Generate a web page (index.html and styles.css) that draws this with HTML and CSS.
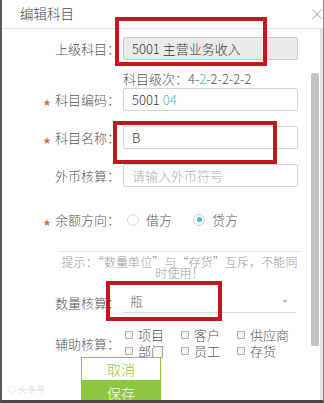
FILE: index.html
```html
<!DOCTYPE html>
<html lang="zh-CN">
<head>
    <meta charset="UTF-8">
    <meta name="viewport" content="width=device-width, initial-scale=1.0">
    <title>编辑科目</title>
    <link rel="stylesheet" href="styles.css">
</head>
<body>
    <div class="window">
        <div class="head">
            <span class="title">编辑科目</span>
            <span class="close">×</span>
        </div>

        <div class="main">
            <div class="form">
                <div class="row first">
                    <label class="lbl">上级科目：</label>
                    <div class="field readonly">5001 主营业务收入</div>
                </div>
                <div class="level">科目级次：4-<span class="hl">2</span>-2-2-2-2</div>

                <div class="row after-level">
                    <label class="lbl"><span class="star">★</span>科目编码：</label>
                    <div class="field">5001 <span class="hl">04</span></div>
                </div>
                <div class="row">
                    <label class="lbl"><span class="star">★</span>科目名称：</label>
                    <div class="field">B</div>
                </div>
                <div class="row">
                    <label class="lbl">外币核算：</label>
                    <div class="field placeholder">请输入外币符号</div>
                </div>
                <div class="row radios">
                    <label class="lbl"><span class="star">★</span>余额方向：</label>
                    <span class="radio"></span><span class="opt">借方</span>
                    <span class="radio on"></span><span class="opt">贷方</span>
                </div>

                <div class="hint">提示：“数量单位”与“存货”互斥，不能同<br>时使用！</div>

                <div class="row select-row">
                    <label class="lbl">数量核算：</label>
                    <div class="select">瓶<span class="caret"></span></div>
                </div>

                <div class="row aux">
                    <label class="lbl">辅助核算：</label>
                    <div class="checks">
                        <span class="check"><i></i>项目</span>
                        <span class="check"><i></i>客户</span>
                        <span class="check"><i></i>供应商</span>
                        <span class="check"><i></i>部门</span>
                        <span class="check"><i></i>员工</span>
                        <span class="check"><i></i>存货</span>
                    </div>
                </div>

                <div class="buttons">
                    <button class="btn cancel">取消</button>
                    <button class="btn save">保存</button>
                </div>
            </div>

            <div class="scroll">
                <div class="thumb"></div>
                <div class="track"></div>
            </div>
        </div>

        <!-- red annotation boxes -->
        <div class="mark m1"></div>
        <div class="mark m2"></div>
        <div class="mark m3"></div>

        <div class="watermark">◎ 头条号</div>
    </div>
</body>
</html>
```

FILE: styles.css
```css
* { box-sizing: border-box; }
body { margin: 0; font-family: "Noto Sans CJK SC", "Noto Sans", sans-serif; font-size: 13px; font-weight: 300; color: #555; background: #fff; }

.window {
    position: relative;
    width: 324px;
    height: 403px;
    overflow: hidden;
    background: #fff;
    border-left: 2px solid #5a5a5a;
    border-right: 1px solid #8a8a8a;
    border-bottom: 3px solid #4a4a4a;
}

.head { display: flex; align-items: center; height: 29px; padding-left: 18px; border-bottom: 1px solid #e3e3e3; }
.title { font-size: 13.5px; color: #444; margin-top: -2px; }
.close { margin-left: auto; font-size: 16px; color: #aaa; margin-top: -2px; margin-right: -2px; }

.main { display: flex; height: 371px; }
.form { flex: 1; }

.row { display: flex; align-items: center; height: 23px; margin-top: 15px; }
.row.first { margin-top: 8px; }
.row.after-level { margin-top: 0; }
.lbl { width: 118px; margin-right: 3px; text-align: right; color: #555; white-space: nowrap; }
.star { color: #e0643a; font-size: 8px; margin-right: 4px; }

.field {
    width: 175px;
    height: 23px;
    line-height: 21px;
    padding-left: 8px;
    border: 1px solid #d4d4d4;
    border-radius: 2px;
    color: #333;
}
.field.readonly { background: #ebebea; border-color: #c8c8c8; }
.field.placeholder { color: #aaa; }
.hl { color: #45bdd0; }

.level { margin: 10px 0 0 121px; height: 18px; line-height: 18px; color: #555; }

.radios { margin-top: 21px; }
.radio { width: 12px; height: 12px; border: 1px solid #dcdcdc; border-radius: 50%; margin-left: 4px; position: relative; }
.radio.on { border-color: #cfcfcf; margin-left: 21px; }
.radio.on::after { content: ""; position: absolute; left: 2.5px; top: 2.5px; width: 5px; height: 5px; border-radius: 50%; background: #3fb8c9; }
.opt { margin-left: 7px; color: #555; }

.hint {
    width: 241px;
    margin: 20px 0 0 57px;
    padding-top: 4px;
    border-top: 1px solid #e6e6e6;
    text-align: center;
    font-size: 12px;
    line-height: 11px;
    letter-spacing: 0.1px;
    color: #999;
}

.select-row { margin-top: 13px; height: 22px; }
.select {
    position: relative;
    width: 173px;
    height: 22px;
    padding: 0 0 2px 7px;
    line-height: 20px;
    border-bottom: 1px solid #ddd;
    color: #666;
}
.caret { position: absolute; right: 8px; top: 9px; border: 3px solid transparent; border-top: 3px solid #bbb; }

.aux { height: 30px; margin-top: 15px; align-items: center; }
.checks { display: grid; grid-template-columns: 56px 56px 60px; grid-auto-rows: 16px; margin-left: 2px; }
.check { display: flex; align-items: center; line-height: 16px; color: #555; }
.check i { width: 8px; height: 8px; border: 1px solid #b5b5b5; background: #f2f2f2; margin-right: 5px; }

.buttons { display: flex; flex-direction: column; width: 80px; margin: -1px 0 0 79px; }
.btn { height: 24px; font-family: inherit; font-size: 14px; font-weight: 300; border: 1px solid #8dc63f; border-radius: 0; padding: 0; }
.cancel { background: #fff; color: #8dc63f; }
.save { background: #8dc63f; color: #fff; }

.scroll { display: flex; width: 12px; }
.thumb { width: 8px; height: 273px; margin-top: 44px; background: #c3c3c3; border-radius: 2px; }
.track { width: 3px; margin-left: 1px; background: #e2e2e2; }

.mark { position: absolute; border: 4px solid #c4161c; }
.m1 { left: 113px; top: 17px; width: 152px; height: 49px; }
.m2 { left: 111px; top: 121px; width: 164px; height: 43px; }
.m3 { left: 104px; top: 281px; width: 116px; height: 40px; }

.watermark { position: absolute; left: 5px; bottom: 4px; font-size: 9px; color: rgba(160, 160, 160, 0.5); }
```
